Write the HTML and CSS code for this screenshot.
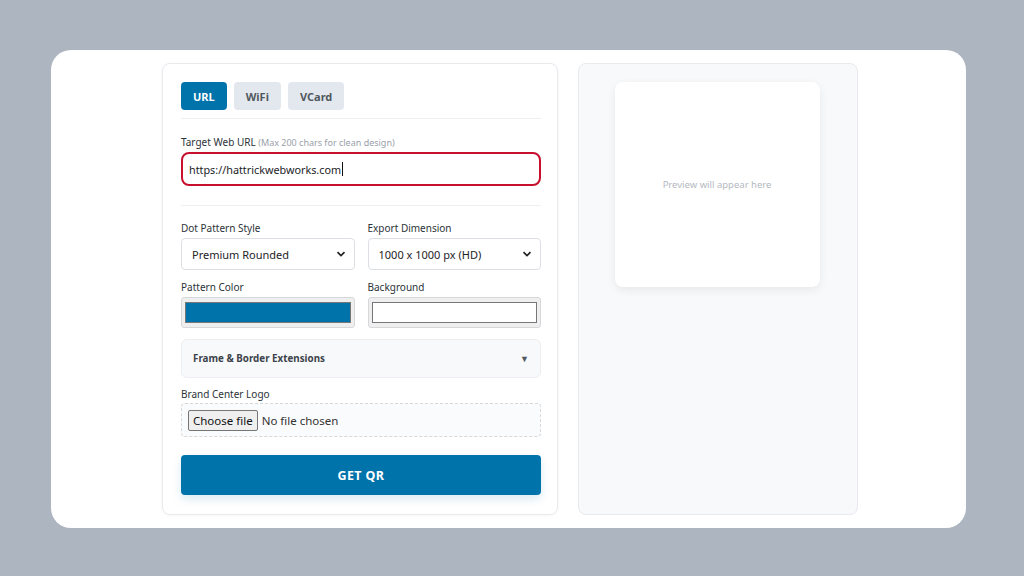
FILE: index.html
```html
<!DOCTYPE html>
<html lang="en">
<head>
    <meta charset="UTF-8">
    <meta name="viewport" content="width=device-width, initial-scale=1.0">
    <title>QR Generator</title>
    <link rel="stylesheet" href="styles.css">
</head>
<body>
    <div class="stage">
        <main class="card">
            <section class="panel form-panel">
                <nav class="tabs">
                    <button class="tab active">URL</button>
                    <button class="tab">WiFi</button>
                    <button class="tab">VCard</button>
                </nav>

                <div class="url-block">
                    <label class="field-label">Target Web URL <span class="hint">(Max 200 chars for clean design)</span></label>
                    <div class="text-input">https://hattrickwebworks.com<span class="caret"></span></div>
                </div>

                <div class="grid-2">
                    <div class="field">
                        <label class="field-label">Dot Pattern Style</label>
                        <div class="select">
                            <span>Premium Rounded</span>
                            <svg width="10" height="10" viewBox="0 0 10 10"><path d="M1.5 3.2 L5 6.6 L8.5 3.2" fill="none" stroke="#222" stroke-width="1.7"/></svg>
                        </div>
                    </div>
                    <div class="field">
                        <label class="field-label">Export Dimension</label>
                        <div class="select">
                            <span>1000 x 1000 px (HD)</span>
                            <svg width="10" height="10" viewBox="0 0 10 10"><path d="M1.5 3.2 L5 6.6 L8.5 3.2" fill="none" stroke="#222" stroke-width="1.7"/></svg>
                        </div>
                    </div>
                    <div class="field">
                        <label class="field-label">Pattern Color</label>
                        <div class="color-input"><span class="swatch" style="background:#0073aa"></span></div>
                    </div>
                    <div class="field">
                        <label class="field-label">Background</label>
                        <div class="color-input"><span class="swatch" style="background:#ffffff"></span></div>
                    </div>
                </div>

                <div class="details">
                    <span>Frame &amp; Border Extensions</span>
                    <span class="arrow">▼</span>
                </div>

                <div class="field">
                    <label class="field-label">Brand Center Logo</label>
                    <div class="file-box">
                        <span class="file-btn">Choose file</span>
                        <span class="file-name">No file chosen</span>
                    </div>
                </div>

                <button class="submit">GET QR</button>
            </section>

            <section class="panel preview-panel">
                <div class="preview">
                    <p>Preview will appear here</p>
                </div>
            </section>
        </main>
    </div>
</body>
</html>
```

FILE: styles.css
```css
:root {
    --page: #adb5c0;
    --blue: #0073aa;
    --line: #e6e9ee;
    --label: #2c3338;
    --muted: #9aa1a9;
}

* {
    margin: 0;
    padding: 0;
    box-sizing: border-box;
}

body {
    font-family: 'Noto Sans', 'Open Sans', sans-serif;
    background-color: var(--page);
    color: #1d2327;
    width: 1024px;
    height: 576px;
    overflow: hidden;
}

.stage {
    padding: 50px 58px 48px 51px;
    height: 100%;
}

.card {
    background: #ffffff;
    border-radius: 20px;
    height: 100%;
    padding: 13px 0;
    display: flex;
    justify-content: center;
    gap: 20px;
    padding-left: 3px;
}

.panel {
    border: 1px solid #e8eaee;
    border-radius: 8px;
}

.form-panel {
    width: 396px;
    padding: 18px 16px 0 18px;
    box-shadow: 0 1px 4px rgba(0, 0, 0, 0.04);
}

.tabs {
    display: flex;
    gap: 7px;
    padding-bottom: 8px;
    border-bottom: 1px solid #eef0f3;
}

.tab {
    height: 28px;
    padding: 0 12px;
    border: none;
    border-radius: 4px;
    background: #e3e8ee;
    color: #50575e;
    font-family: inherit;
    font-size: 11px;
    font-weight: 700;
}

.tab.active {
    background: var(--blue);
    color: #ffffff;
}

.url-block {
    padding: 16px 0 19px;
    border-bottom: 1px solid #eef0f3;
}

.field-label {
    display: block;
    font-size: 10px;
    line-height: 14px;
    color: var(--label);
    margin-bottom: 2px;
}

.hint {
    color: var(--muted);
    font-size: 9px;
}

.text-input {
    height: 34px;
    border: 2px solid #c8102e;
    border-radius: 8px;
    padding: 0 6px;
    display: flex;
    align-items: center;
    font-size: 10.8px;
    color: #1d2327;
}

.caret {
    display: inline-block;
    width: 1px;
    height: 14px;
    background: #111;
    margin-left: 1px;
}

.grid-2 {
    display: grid;
    grid-template-columns: 1fr 1fr;
    column-gap: 13px;
    row-gap: 10px;
    margin-top: 15px;
}

.grid-2 .field-label {
    margin-bottom: 3px;
}

.select {
    height: 32px;
    border: 1px solid #dcdfe4;
    border-radius: 4px;
    padding: 0 8px 0 10px;
    display: flex;
    align-items: center;
    justify-content: space-between;
    font-size: 11px;
    color: #1d2327;
}

.color-input {
    height: 31px;
    background: #efefef;
    border: 1px solid #d5d7da;
    border-radius: 3px;
    padding: 4px 3px;
    display: flex;
}

.swatch {
    flex: 1;
    border: 1px solid #777;
}

.details {
    margin: 11px 0 9px;
    height: 39px;
    background: #f8f9fa;
    border: 1px solid #eceef1;
    border-radius: 6px;
    padding: 0 11px;
    display: flex;
    align-items: center;
    justify-content: space-between;
    font-size: 9.8px;
    font-weight: 700;
    color: #3c434a;
}

.arrow {
    font-size: 9px;
    color: #50575e;
}

.file-box {
    margin-top: 1px;
    height: 34px;
    border: 1px dashed #d5d8dc;
    border-radius: 4px;
    background: #fafbfc;
    padding: 0 6px;
    display: flex;
    align-items: center;
    gap: 4px;
    font-size: 11.5px;
}

.file-btn {
    padding: 2px 4px;
    background: #efefef;
    border: 1px solid #767676;
    border-radius: 2px;
    color: #111;
}

.file-name {
    color: #333;
}

.submit {
    margin-top: 18px;
    width: 100%;
    height: 40px;
    border: none;
    border-radius: 4px;
    background: var(--blue);
    color: #ffffff;
    font-family: inherit;
    font-size: 12.5px;
    font-weight: 700;
    letter-spacing: 0.03em;
    box-shadow: 0 4px 10px rgba(0, 115, 170, 0.15);
}

.preview-panel {
    width: 280px;
    background: #f8f9fa;
    padding-top: 18px;
    display: flex;
    justify-content: center;
    align-items: flex-start;
}

.preview {
    width: 205px;
    height: 205px;
    margin-right: 2px;
    background: #ffffff;
    border-radius: 8px;
    box-shadow: 0 3px 10px rgba(0, 0, 0, 0.07);
    display: flex;
    align-items: center;
    justify-content: center;
}

.preview p {
    font-size: 9.5px;
    color: #b4b9bf;
}
```
